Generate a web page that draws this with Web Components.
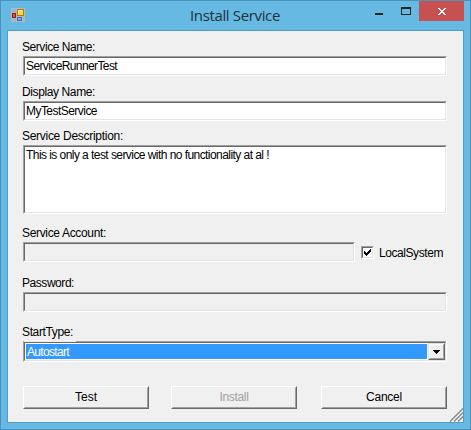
<!DOCTYPE html>
<html lang="en">
<head>
<meta charset="utf-8">
<title>Install Service</title>
<style>
html,body{margin:0;height:100%;overflow:hidden}
body{font:12px/14px "Liberation Sans",Arial,sans-serif;color:#000}
.row{display:flex;align-items:flex-start}
</style>
</head>
<body>
<app-window>
  <fit-text slot="title" width="90">Install Service</fit-text>
  <form-field style="margin-top:9px"><fit-text slot="label" width="73">Service Name:</fit-text><text-box><fit-text width="91">ServiceRunnerTest</fit-text></text-box></form-field>
  <form-field style="margin-top:9px"><fit-text slot="label" width="73">Display Name:</fit-text><text-box><fit-text width="71">MyTestService</fit-text></text-box></form-field>
  <form-field style="margin-top:8px"><fit-text slot="label" width="101">Service Description:</fit-text><text-box style="height:69px"><fit-text width="243">This is only a test service with no functionality at al !</fit-text></text-box></form-field>
  <form-field style="margin-top:12px"><fit-text slot="label" width="84">Service Account:</fit-text>
    <div class="row"><text-box disabled style="width:332px"></text-box><check-box><fit-text width="64">LocalSystem</fit-text></check-box></div></form-field>
  <form-field style="margin-top:14px"><fit-text slot="label" width="52">Password:</fit-text><text-box disabled></text-box></form-field>
  <form-field style="margin-top:13px"><fit-text slot="label" width="51">StartType:</fit-text><combo-box><fit-text width="42">Autostart</fit-text></combo-box></form-field>
  <div class="row" style="margin-top:24px">
    <push-button><fit-text width="22">Test</fit-text></push-button>
    <push-button style="margin-left:22px" disabled><fit-text width="29">Install</fit-text></push-button>
    <push-button style="margin-left:24px"><fit-text width="36">Cancel</fit-text></push-button>
  </div>
</app-window>
<script>
const define=(name,html)=>customElements.define(name,class extends HTMLElement{
  constructor(){super();this.attachShadow({mode:'open'}).innerHTML=html;}
});

define('app-window',`<style>
:host{display:flex;flex-direction:column;box-sizing:border-box;width:471px;height:430px;border:1px solid #4b92b8;background:#66b9e3;padding:0 6px 6px;position:relative}
header{height:29px;flex:none;display:flex;align-items:flex-start}
.icon{margin:7px 0 0 4px;flex:none}
.title{font:15px/20px "Open Sans","Noto Sans",sans-serif;color:#22303a;margin:4px 0 0 165px;flex:1}
.controls{flex:none}
svg{display:block}
main{box-sizing:border-box;flex:1;border:1px solid #4f9cc4;background:#f0f0f0;padding:0 16px 0 15px;position:relative}
.grip{position:absolute;right:0;bottom:0}
</style>
<header>
<svg class="icon" width="14" height="14" shape-rendering="crispEdges">
<rect width="14" height="14" fill="#b9b9b5"/><path d="M1 1h4v3H1zM1 11h4v2H1zM12 10h1v3h-1z" fill="#8fb9cf"/>
<rect x="6" y="1" width="7" height="7" fill="#b07a10"/><rect x="7" y="2" width="5" height="5" fill="#ffd541"/><path d="M7 2h4v1H8v3H7z" fill="#fff0a0"/>
<rect x="1" y="5" width="4" height="5" fill="#9d1414"/><rect x="2" y="6" width="2" height="3" fill="#e45345"/>
<rect x="6" y="9" width="5" height="4" fill="#356fc9"/><rect x="7" y="10" width="3" height="2" fill="#79a8f0"/>
</svg>
<div class="title"><slot name="title"></slot></div>
<svg class="controls" width="94" height="20" shape-rendering="crispEdges">
<rect x="5" y="12" width="8" height="2" fill="#222"/>
<path fill="#222" fill-rule="evenodd" d="M31 6h10v8H31zM32 8v5h8V8z"/>
<rect x="49" width="45" height="20" fill="#c75050"/>
<path fill="#fff" d="M68 7h2v1h1v1h2V8h1V7h2v1h-1v1h-1v1h-1v1h1v1h1v1h1v1h-2v-1h-1v-1h-2v1h-1v1h-2v-1h1v-1h1v-1h1v-1h-1V9h-1V8h-1z"/>
</svg>
</header>
<main><slot></slot>
<svg class="grip" width="14" height="14"><g fill="none" stroke="#fff"><path d="M0 13.5L13.5 0M4 13.5L13.5 4M8 13.5L13.5 8"/></g><g fill="none" stroke="#858585" stroke-width="1.4"><path d="M1 13.5L14 .5M5 13.5L14 4.5M9 13.5L14 8.5"/></g></svg>
</main>`);

define('form-field',`<style>
:host{display:flex;flex-direction:column}
.label{height:14px;margin:0 0 2px -1px}
</style><div class="label"><slot name="label"></slot></div><slot></slot>`);

define('text-box',`<style>
:host{display:block;box-sizing:border-box;height:20px;background:#fff;border:1px solid;border-color:#a0a0a0 #fff #fff #a0a0a0}
:host([disabled]){background:#f0f0f0}
div{box-sizing:border-box;height:100%;border:1px solid;border-color:#696969 #e3e3e3 #e3e3e3 #696969;padding:1px 0 0 1px}
</style><div><slot></slot></div>`);

define('check-box',`<style>
:host{display:flex;align-items:flex-start;margin:4px 0 0 6px}
.box{box-sizing:border-box;width:13px;height:13px;flex:none;background:#fff;border:1px solid;border-color:#a0a0a0 #fff #fff #a0a0a0}
.in{box-sizing:border-box;width:11px;height:11px;border:1px solid;border-color:#696969 #e3e3e3 #e3e3e3 #696969}
svg{display:block}
.text{margin-left:5px}
</style><div class="box"><div class="in"><svg width="9" height="9" shape-rendering="crispEdges"><path d="M1 3h1v1h1v1h1V4h1V3h1V2h1V1h1v3H7v1H6v1H5v1H4v1H3V7H2V6H1z"/></svg></div></div><div class="text"><slot></slot></div>`);

define('combo-box',`<style>
:host{display:block;box-sizing:border-box;height:21px;border:1px solid;border-color:#a0a0a0 #fff #fff #a0a0a0;background:#f0f0f0;border-top:0;padding-top:1px;position:relative}
:host::before{content:"";position:absolute;left:52px;right:0;top:0;height:1px;background:#a0a0a0}
.in{box-sizing:border-box;height:19px;display:flex;border:1px solid;border-color:#696969 #e3e3e3 #e3e3e3 #696969;background:#fff}
.value{flex:1;margin:1px 1px 1px;box-sizing:border-box;height:15px;background:#39f;color:#fff;padding:1px 0 0 1px}
.arrow{box-sizing:border-box;width:17px;height:17px;border:1px solid;border-color:#e3e3e3 #696969 #696969 #e3e3e3;background:#f0f0f0}
svg{display:block;box-sizing:border-box;border:1px solid;border-color:#fff #a0a0a0 #a0a0a0 #fff}
</style><div class="in"><div class="value"><slot></slot></div><div class="arrow"><svg width="15" height="15" viewBox="0 0 13 13" shape-rendering="crispEdges"><path d="M3 5h7v1H9v1H8v1H7v1H6V8H5V7H4V6H3z"/></svg></div></div>`);

define('push-button',`<style>
:host{display:block;box-sizing:border-box;width:126px;height:23px;background:#f0f0f0;border:1px solid;border-color:#fff #696969 #696969 #fff}
:host([disabled]){color:#a0a0a0}
div{box-sizing:border-box;height:21px;border:1px solid;border-color:#f0f0f0 #a0a0a0 #a0a0a0 #f0f0f0;display:flex;justify-content:center;padding-top:2px}
</style><div><slot></slot></div>`);

/* Single-line text whose letter spacing is adjusted to a given width. */
customElements.define('fit-text',class extends HTMLElement{
  constructor(){super();this.attachShadow({mode:'open'}).innerHTML='<style>:host{display:block;width:max-content;white-space:pre}</style><slot></slot>';}
  connectedCallback(){
    const gap=(+this.getAttribute('width')-this.getBoundingClientRect().width)/this.textContent.length;
    this.style.letterSpacing=gap.toFixed(3)+'px';
  }
});
</script>
</body>
</html>
